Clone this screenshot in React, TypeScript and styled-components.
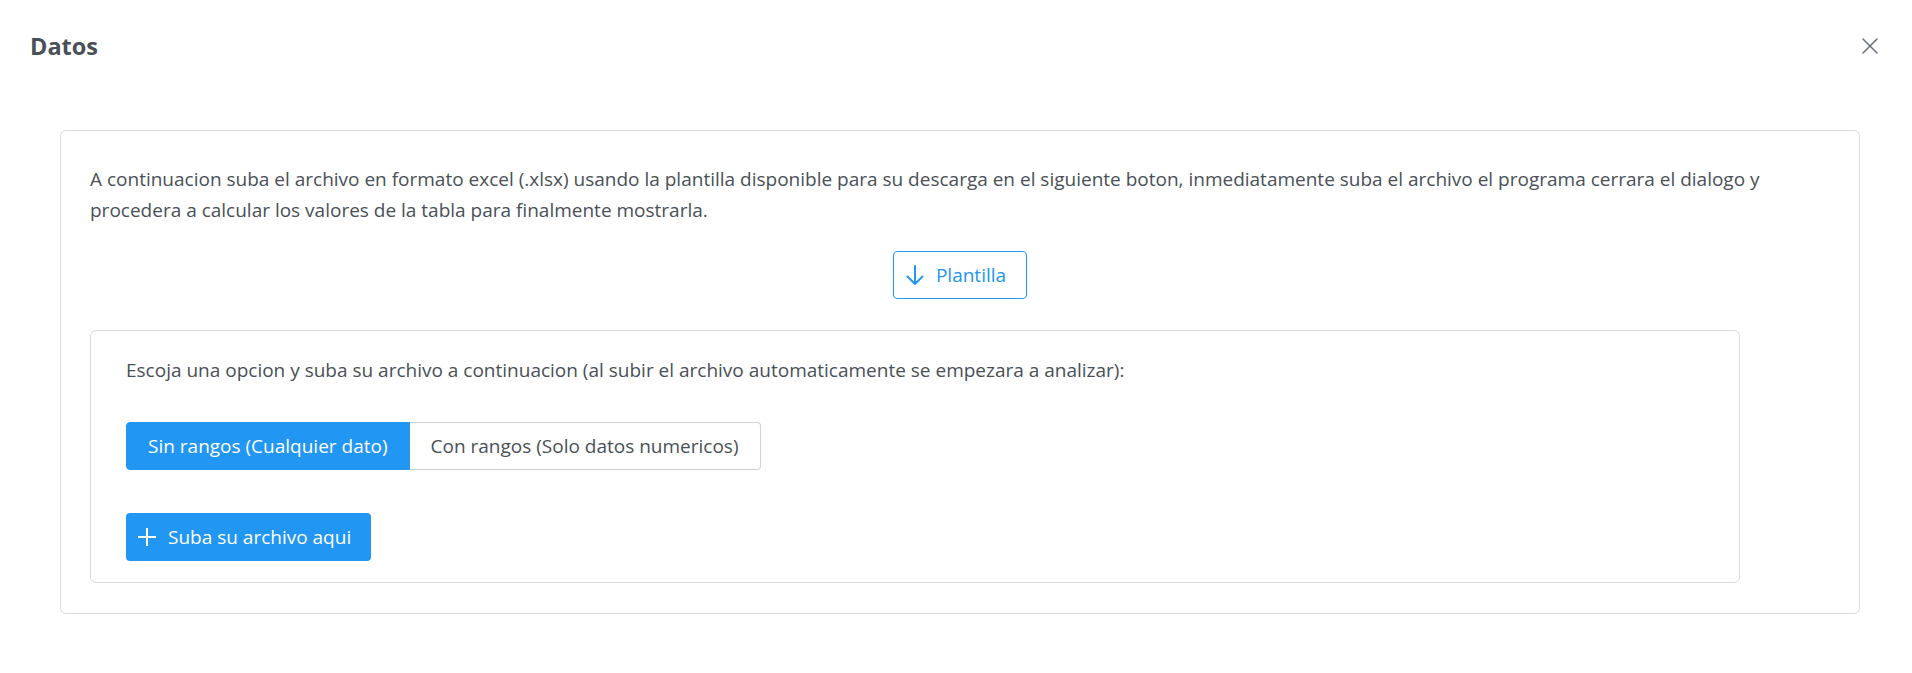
import React, { useState } from "react";
import styled, { createGlobalStyle } from "styled-components";

const Global = createGlobalStyle`
  html, body { margin: 0; padding: 0; background: #ffffff; }
  body { font-family: "Open Sans", "Noto Sans", sans-serif; color: #495057; }
  * { box-sizing: border-box; }
`;

const Page = styled.div`
  width: 1912px;
  min-height: 673px;
  background: #fff;
`;

const Header = styled.header`
  height: 92px;
  display: flex;
  align-items: center;
  justify-content: space-between;
  padding: 0 34px 0 30px;
`;

const Title = styled.h2`
  margin: 0;
  font-size: 23.5px;
  font-weight: 700;
  color: #495057;
  line-height: 1.2;
`;

const CloseButton = styled.button`
  border: 0;
  background: transparent;
  padding: 0;
  width: 16px;
  height: 16px;
  display: flex;
  color: #6c757d;
  cursor: pointer;
`;

const Body = styled.div`
  padding: 38px 52px 0 60px;
`;

const OuterCard = styled.section`
  border: 1px solid #dadada;
  border-radius: 6px;
  padding: 33px 29px 30px 29px;
  display: flex;
  flex-direction: column;
`;

const Paragraph = styled.p`
  margin: 0;
  font-size: 19px;
  line-height: 31px;
  color: #495057;
`;

const Center = styled.div`
  display: flex;
  justify-content: center;
  margin-top: 25px;
`;

const OutlineButton = styled.button`
  height: 48px;
  display: inline-flex;
  align-items: center;
  gap: 12px;
  padding: 0 20px 0 12px;
  border: 1px solid #2196f3;
  border-radius: 4px;
  background: #fff;
  color: #2196f3;
  font-family: inherit;
  font-size: 19px;
  cursor: pointer;
`;

const InnerCard = styled.div`
  margin-top: 31px;
  width: 1650px;
  border: 1px solid #dadada;
  border-radius: 6px;
  padding: 24px 35px 21px 35px;
  display: flex;
  flex-direction: column;
  align-items: flex-start;
`;

const InnerText = styled.p`
  margin: 0;
  font-size: 19px;
  line-height: 31px;
  color: #495057;
`;

const ToggleGroup = styled.div`
  margin-top: 36px;
  display: flex;
`;

const ToggleButton = styled.button<{ $active: boolean }>`
  height: 48px;
  padding: 0 21px;
  font-family: inherit;
  font-size: 19px;
  cursor: pointer;
  border: 1px solid ${(p) => (p.$active ? "#2196f3" : "#ced4da")};
  background: ${(p) => (p.$active ? "#2196f3" : "#fff")};
  color: ${(p) => (p.$active ? "#fff" : "#495057")};
  &:first-child {
    border-radius: 4px 0 0 4px;
  }
  &:last-child {
    border-radius: 0 4px 4px 0;
    border-left: 0;
  }
`;

const UploadButton = styled.button`
  margin-top: 43px;
  height: 48px;
  display: inline-flex;
  align-items: center;
  gap: 11px;
  padding: 0 20px 0 11px;
  border: 0;
  border-radius: 4px;
  background: #2196f3;
  color: #fff;
  font-family: inherit;
  font-size: 19px;
  cursor: pointer;
`;

const CloseIcon = () => (
  <svg width="16" height="16" viewBox="0 0 16 16" fill="none" stroke="currentColor" strokeWidth="1.6" strokeLinecap="round">
    <path d="M1 1 L15 15 M15 1 L1 15" />
  </svg>
);

const ArrowDownIcon = () => (
  <svg width="18" height="22" viewBox="0 0 18 22" fill="none" stroke="currentColor" strokeWidth="2" strokeLinecap="round" strokeLinejoin="round">
    <path d="M9 2 V20 M1.5 12.5 L9 20 L16.5 12.5" />
  </svg>
);

const PlusIcon = () => (
  <svg width="20" height="20" viewBox="0 0 20 20" fill="none" stroke="currentColor" strokeWidth="2">
    <path d="M10 1 V19 M1 10 H19" />
  </svg>
);

export default function App() {
  const [mode, setMode] = useState(0);
  return (
    <Page>
      <Global />
      <Header>
        <Title>Datos</Title>
        <CloseButton aria-label="Cerrar">
          <CloseIcon />
        </CloseButton>
      </Header>
      <Body>
        <OuterCard>
          <Paragraph>
            A continuacion suba el archivo en formato excel (.xlsx) usando la plantilla disponible para su descarga en el siguiente boton, inmediatamente suba el archivo el programa cerrara el dialogo y procedera a calcular los valores de la tabla para finalmente mostrarla.
          </Paragraph>
          <Center>
            <OutlineButton>
              <ArrowDownIcon />
              Plantilla
            </OutlineButton>
          </Center>
          <InnerCard>
            <InnerText>
              Escoja una opcion y suba su archivo a continuacion (al subir el archivo automaticamente se empezara a analizar):
            </InnerText>
            <ToggleGroup>
              <ToggleButton $active={mode === 0} onClick={() => setMode(0)}>
                Sin rangos (Cualquier dato)
              </ToggleButton>
              <ToggleButton $active={mode === 1} onClick={() => setMode(1)}>
                Con rangos (Solo datos numericos)
              </ToggleButton>
            </ToggleGroup>
            <UploadButton>
              <PlusIcon />
              Suba su archivo aqui
            </UploadButton>
          </InnerCard>
        </OuterCard>
      </Body>
    </Page>
  );
}
